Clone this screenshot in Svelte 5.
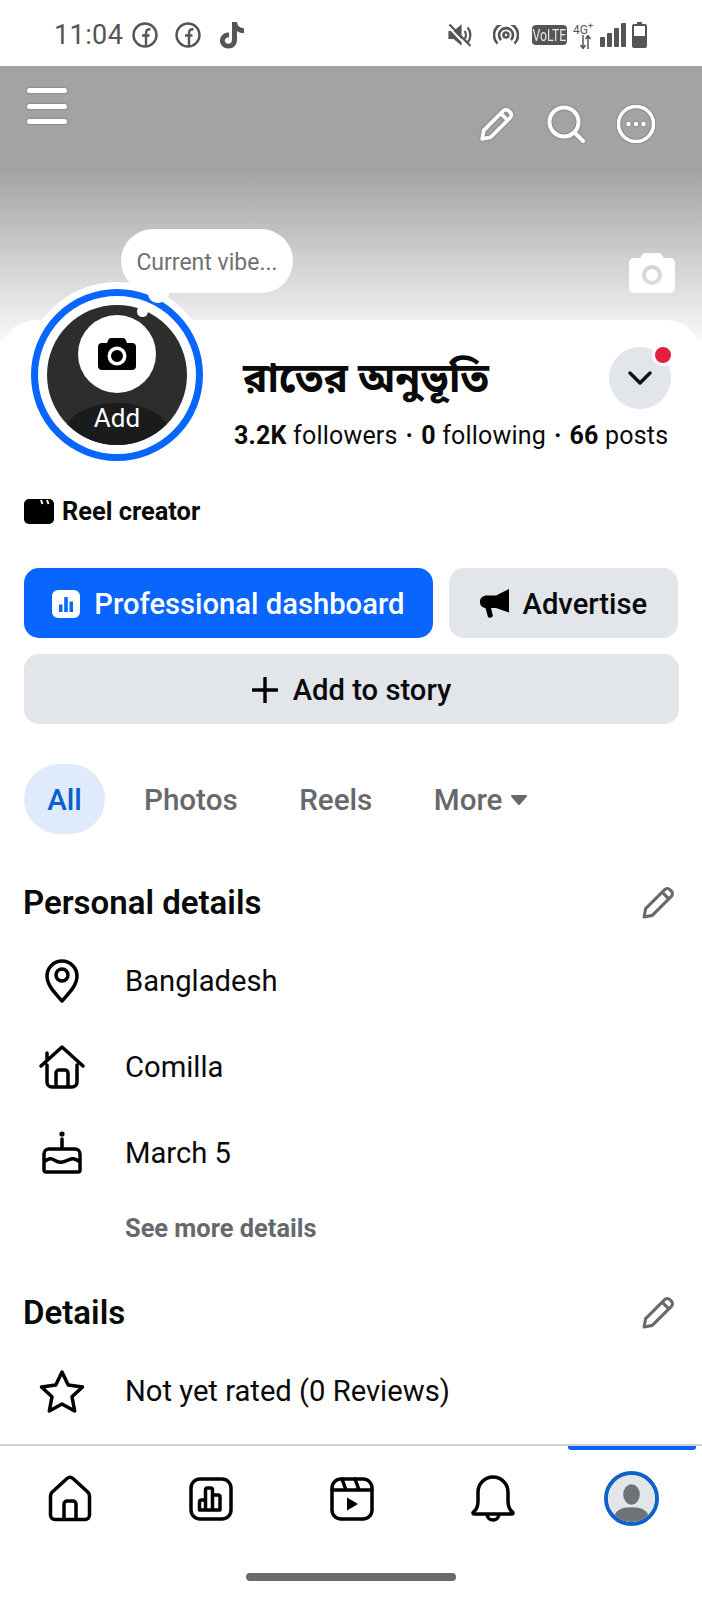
<script lang="ts">
  const tabs = ['Photos', 'Reels'];
  const penPath = 'M3 31l1.5-8L23 4.5a3.5 3.5 0 0 1 5 0L29.500 6a3.5 3.5 0 0 1 0 5L11 29.5ZM20.5 7l6.5 6.5';
</script>

<div class="phone">
  <header class="status">
    <span class="time">11:04</span>
    <svg class="fb" viewBox="0 0 26 26"><circle cx="13" cy="13" r="11.5" /><path d="M14 24V11.500c0-3 1-4.500 4.500-4.300M10 13.500h7.500" /></svg>
    <svg class="fb fb2" viewBox="0 0 26 26"><circle cx="13" cy="13" r="11.5" /><path d="M14 24V11.500c0-3 1-4.500 4.500-4.300M10 13.500h7.500" /></svg>
    <svg class="tiktok" viewBox="0 0 27 28"><path d="M14 1h5c.3 3.600 2.700 6 7 6.300v5c-2.700 0-5-.8-7-2.200V19c0 5-3.700 8.500-8.500 8.500S2 24 2 19.500 5.800 11 11 11.500v5c-2.500-.5-4.200 1-4.200 3 0 1.800 1.500 3.200 3.400 3.200 2.200 0 3.800-1.500 3.800-4Z" /></svg>
    <span class="spacer"></span>
    <svg class="mute" viewBox="0 0 24 24"><path class="mute-fill" d="M1.500 9H6l6.500-5.500v17L6 15H1.500Z" /><path d="M16.500 8c2 2 2 6 0 8M19.500 4.500c3.700 3.700 3.700 11.300 0 15" /><path class="mute-gap" d="M0 3.500l20 21" /><path d="M1.500 1.500l21 21.500" /></svg>
    <svg class="hotspot" viewBox="0 0 26 20"><circle cx="13" cy="10" r="2.5" /><path d="M8 15a7 7 0 1 1 10 0M4.500 18.500a12 12 0 1 1 17 0" /></svg>
    <span class="volte"><span>VoLTE</span></span>
    <span class="net">
      <span>4G<sup>+</sup></span>
      <svg viewBox="0 0 11 14"><path d="M3 0v13M0.500 10l2.500 3.500L5.500 10M8 14V1M5.500 4L8 .5 10.500 4" /></svg>
    </span>
    <svg class="signal" viewBox="0 0 26 24"><rect x="0" y="14" width="5" height="10" rx="1" /><rect x="7" y="10" width="5" height="14" rx="1" /><rect x="14" y="5" width="5" height="19" rx="1" /><rect x="21" y="0" width="5" height="24" rx="1" /></svg>
    <svg class="battery" viewBox="0 0 15 26"><path d="M5 0h5v2h3a2 2 0 0 1 2 2v20a2 2 0 0 1-2 2H2a2 2 0 0 1-2-2V4a2 2 0 0 1 2-2h3Zm-3 4v10h11V4Z" fill-rule="evenodd" /></svg>
  </header>

  <section class="cover">
    <div class="cover-bar">
      <div class="burger"><i></i><i></i><i></i></div>
      <div class="cover-actions">
        <svg viewBox="0 0 34 34" class="pen"><path d={penPath} /></svg>
        <svg viewBox="0 0 38 38" class="search"><circle cx="17" cy="17" r="14.5" /><path d="M27.500 27.500L36 36" /></svg>
        <svg viewBox="0 0 38 38" class="more"><circle cx="19" cy="19" r="17.5" /><circle class="dot" cx="11.5" cy="19" r="2.2" /><circle class="dot" cx="19" cy="19" r="2.2" /><circle class="dot" cx="26.5" cy="19" r="2.2" /></svg>
      </div>
    </div>
    <svg class="cover-cam" viewBox="0 0 46 40"><path fill-rule="evenodd" d="M17 0h12c3 0 4.500 1.500 5.500 5H41a5 5 0 0 1 5 5v25a5 5 0 0 1-5 5H5a5 5 0 0 1-5-5V10a5 5 0 0 1 5-5h6.500C12.500 1.500 14 0 17 0Zm6 12a10 10 0 1 0 0 20 10 10 0 0 0 0-20Zm0 4a6 6 0 1 1 0 12 6 6 0 0 1 0-12Z" /></svg>
  </section>

  <main class="sheet">
    <div class="head">
      <div class="avatar">
        <div class="bubble">Current vibe...</div>
        <i class="tail"></i>
        <i class="tail-dot"></i>
        <div class="avatar-ring">
          <div class="avatar-dark">
            <div class="cam-circle">
              <svg viewBox="0 0 38 32"><path fill-rule="evenodd" d="M13 0h12a3 3 0 0 1 3 2.500L29 5h5a4 4 0 0 1 4 4v19a4 4 0 0 1-4 4H4a4 4 0 0 1-4-4V9a4 4 0 0 1 4-4h5l1-2.500A3 3 0 0 1 13 0Zm6 8.500a9.500 9.500 0 1 0 0 19 9.500 9.500 0 0 0 0-19Zm0 3.500a6 6 0 1 1 0 12 6 6 0 0 1 0-12Z" /></svg>
            </div>
            <div class="add">Add</div>
          </div>
        </div>
      </div>
      <div class="head-info">
        <div class="name-row">
          <h1>রাতের অনুভূতি</h1>
          <div class="chev">
            <svg viewBox="0 0 24 16"><path d="M2 3l10 10L22 3" /></svg>
            <i></i>
          </div>
        </div>
        <p class="stats"><b>3.2K</b> followers <span>·</span> <b>0</b> following <span>·</span> <b>66</b> posts</p>
      </div>
    </div>

    <div class="reel">
      <svg viewBox="0 0 30 25"><path d="M5 0h20a5 5 0 0 1 5 5v15a5 5 0 0 1-5 5H5a5 5 0 0 1-5-5V5a5 5 0 0 1 5-5Z" /><path class="cut" d="M17 1l1.500 4M23 1l1.500 4" /></svg>
      <span>Reel creator</span>
    </div>

    <div class="btn-row">
      <button class="btn primary">
        <svg viewBox="0 0 28 28"><path fill-rule="evenodd" d="M6 0h16a6 6 0 0 1 6 6v16a6 6 0 0 1-6 6H6a6 6 0 0 1-6-6V6a6 6 0 0 1 6-6Zm1 14.500V22h3.500v-7.500Zm5.200-7.500v15h3.600V7Zm5.300 4.500V22H21V11.500Z" /></svg>
        Professional dashboard
      </button>
      <button class="btn advertise">
        <svg viewBox="0 0 29 29"><path d="M29 0v23.500L16 19H11l1.800 7.500c.5 2-4.300 3.300-5 1L5.500 19C2 18.500 0 16 0 13.500v-1C0 9 3 6.500 7 6.500h9Z" /></svg>
        Advertise
      </button>
    </div>
    <button class="btn wide">
      <svg viewBox="0 0 26 26"><path d="M13 1v24M1 13h24" /></svg>
      Add to story
    </button>

    <nav class="tabs">
      <span class="tab active">All</span>
      {#each tabs as t}
        <span class="tab">{t}</span>
      {/each}
      <span class="tab">More <svg class="caret" viewBox="0 0 18 12"><path d="M2 2h14l-7 8Z" /></svg></span>
    </nav>

    <div class="sec-head first">
      <h2>Personal details</h2>
      <svg viewBox="0 0 34 34"><path d={penPath} /></svg>
    </div>
    <div class="rows">
      <div class="row">
        <span class="ico"><svg viewBox="0 0 36 46" width="36" height="46"><path d="M18 43C10 34 3 27 3 18a15 15 0 0 1 30 0c0 9-7 16-15 25Z" /><circle cx="18" cy="17" r="6" /></svg></span>
        <span>Bangladesh</span>
      </div>
      <div class="row">
        <span class="ico"><svg viewBox="0 0 46 44" width="46" height="44"><path d="M8 20v17a5 5 0 0 0 5 5h20a5 5 0 0 0 5-5V20M2 21L23 2l21 19M8 14V8M17 42V28a3 3 0 0 1 3-3h6a3 3 0 0 1 3 3v14" /></svg></span>
        <span>Comilla</span>
      </div>
      <div class="row">
        <span class="ico"><svg viewBox="0 0 40 44" width="40" height="44"><circle class="solid" cx="20" cy="3" r="2.6" /><path d="M20 8v8M2 23a5 5 0 0 1 5-5h26a5 5 0 0 1 5 5v16a2 2 0 0 1-2 2H4a2 2 0 0 1-2-2ZM2 31c5-4 7-4 11-1.500s7 2.500 12 0 7-2.500 13 1.500" /></svg></span>
        <span>March 5</span>
      </div>
    </div>
    <div class="see-more">See more details</div>

    <div class="sec-head second">
      <h2>Details</h2>
      <svg viewBox="0 0 34 34"><path d={penPath} /></svg>
    </div>
    <div class="row rated">
      <span class="ico"><svg viewBox="0 0 46 44" width="46" height="44"><path d="M23 3l6.200 13 14.300 1.900-10.500 9.900 2.700 14.200L23 35l-12.700 7 2.700-14.200L2.500 17.900 16.800 16Z" /></svg></span>
      <span>Not yet rated (0 Reviews)</span>
    </div>
  </main>

  <footer class="nav">
    <i class="nav-active"></i>
    <svg viewBox="0 0 44 46" width="44" height="46"><path d="M2.500 20c0-1.500.5-2.800 1.500-3.800L19 2.500c1.800-1.500 4.200-1.500 6 0l15 13.700c1 1 1.500 2.300 1.500 3.800v19a4.500 4.500 0 0 1-4.500 4.500H7a4.500 4.500 0 0 1-4.500-4.500ZM16 43V28a3 3 0 0 1 3-3h6a3 3 0 0 1 3 3v15" /></svg>
    <svg viewBox="0 0 44 44" width="44" height="44"><rect x="2" y="2" width="40" height="40" rx="9" /><path d="M10.500 33V25a2 2 0 0 1 2-2h2a2 2 0 0 1 2 2v8ZM16.500 33V13a2 2 0 0 1 2-2h3a2 2 0 0 1 2 2v20ZM23.500 33V20a2 2 0 0 1 2-2H29a2 2 0 0 1 2 2v13Z" /></svg>
    <svg viewBox="0 0 44 44" width="44" height="44"><rect x="2" y="2" width="40" height="40" rx="9" /><path d="M2 13h40M12 2l4 11M25 2l4 11" /><path class="solid" d="M17 20.500v13l11-6.500Z" /></svg>
    <svg viewBox="0 0 44 46" width="44" height="46"><path d="M2.500 36c3.500-2.500 4.500-6 4.500-11V16a15 15 0 0 1 30 0v9c0 5 1 8.500 4.500 11 1 1 .5 2-1 2h-37c-1.500 0-2-1-1-2ZM16 38c0 8 12 8 12 0" /></svg>
    <div class="me">
      <svg viewBox="0 0 48 48" width="48" height="48"><circle class="me-bg" cx="24" cy="24" r="24" /><ellipse class="me-fg" cx="24" cy="20" rx="8.500" ry="10.500" /><path class="me-fg" d="M6 44c1-8 8-11 18-11s17 3 18 11c-10 6-26 6-36 0Z" /></svg>
    </div>
  </footer>
  <div class="home-bar"><i></i></div>
</div>

<style>
  :global(body) {
    margin: 0;
    background: #fff;
  }

  .phone {
    width: 702px;
    height: 1600px;
    overflow: hidden;
    background: #fff;
    font-family: Roboto, "Noto Sans Bengali", "Noto Sans", sans-serif;
    color: #0a0a0a;
  }

  /* status bar */
  .status {
    height: 66px;
    display: flex;
    align-items: center;
    padding: 4px 55px 0 54px;
    box-sizing: border-box;
    color: #555;
  }

  .status svg {
    flex-shrink: 0;
  }

  .time {
    font-size: 27px;
    width: 78px;
    letter-spacing: 0.4px;
  }

  .fb {
    width: 26px;
    height: 26px;
    fill: none;
    stroke: #555;
    stroke-width: 2.4;
  }

  .fb2 {
    margin-left: 17px;
  }

  .tiktok {
    width: 27px;
    height: 28px;
    margin-left: 17px;
    fill: #555;
  }

  .spacer {
    flex: 1;
  }

  .mute {
    width: 24px;
    height: 24px;
    fill: none;
    stroke: #555;
    stroke-width: 2.2;
  }

  .mute-fill {
    fill: #555;
  }

  .mute .mute-gap {
    stroke: #fff;
    stroke-width: 2;
  }

  .hotspot {
    width: 26px;
    height: 20px;
    margin-left: 21px;
    fill: none;
    stroke: #555;
    stroke-width: 2.6;
  }

  .volte {
    margin-left: 13px;
    width: 35px;
    height: 20px;
    background: #555;
    color: #e8e8e8;
    border-radius: 4px;
    font-size: 17px;
    line-height: 20px;
    display: flex;
    justify-content: center;
    overflow: hidden;
  }

  .volte span {
    transform: scaleX(0.72);
    white-space: nowrap;
  }

  .net {
    width: 27px;
    margin-left: 6px;
    font-size: 12px;
    line-height: 10px;
    display: flex;
    flex-direction: column;
    align-self: flex-start;
    margin-top: 21px;
  }

  .net sup {
    font-size: 9px;
    line-height: 0;
  }

  .net svg {
    width: 11px;
    height: 14px;
    margin-left: 7px;
    fill: none;
    stroke: #555;
    stroke-width: 1.5;
  }

  .signal {
    width: 26px;
    height: 24px;
    fill: #555;
  }

  .battery {
    width: 15px;
    height: 26px;
    margin-left: 6px;
    fill: #555;
  }

  /* cover */
  .cover {
    height: 274px;
    background: linear-gradient(#a3a3a3 0, #a3a3a3 38%, #f8f8f8 100%);
    position: relative;
  }

  .cover-bar {
    display: flex;
    justify-content: space-between;
    padding: 22px 47px 0 27px;
  }

  .burger {
    display: flex;
    flex-direction: column;
    gap: 10.5px;
    width: 40px;
    filter: drop-shadow(0 0 1px rgba(0, 0, 0, 0.35));
  }

  .burger i {
    height: 5px;
    border-radius: 3px;
    background: #fff;
  }

  .cover-actions {
    display: flex;
    align-items: center;
    gap: 32px;
    margin-top: 17px;
  }

  .cover-actions svg {
    fill: none;
    stroke: #fff;
    stroke-width: 3.5;
    stroke-linecap: round;
    stroke-linejoin: round;
    filter: drop-shadow(0 0 1px rgba(0, 0, 0, 0.35));
  }

  .cover-actions .search {
    stroke-width: 4;
  }

  .pen {
    width: 36px;
    height: 36px;
  }

  .search, .more {
    width: 38px;
    height: 38px;
  }

  .more .dot {
    fill: #fff;
    stroke: none;
  }

  .cover-cam {
    position: absolute;
    right: 27px;
    top: 187px;
    width: 46px;
    height: 40px;
    fill: #fff;
  }

  /* sheet */
  .sheet {
    position: relative;
    margin-top: -20px;
    height: 1124px;
    background: #fff;
    border-radius: 36px 36px 0 0;
    padding: 0 24px;
    box-sizing: border-box;
  }

  .head {
    display: flex;
    align-items: flex-start;
  }

  .avatar {
    position: relative;
    width: 172px;
    height: 172px;
    margin: -31px 0 0 7px;
    flex-shrink: 0;
  }

  .avatar-ring {
    position: relative;
    box-sizing: border-box;
    width: 172px;
    height: 172px;
    border-radius: 50%;
    border: 7px solid #0866ff;
    background: #fff;
    box-shadow: 0 0 0 7px #fff;
    display: flex;
    align-items: center;
    justify-content: center;
  }

  .avatar-dark {
    position: relative;
    width: 140px;
    height: 140px;
    border-radius: 50%;
    overflow: hidden;
    background: #2d2d2d;
  }

  .cam-circle {
    width: 78px;
    height: 78px;
    margin: 10px auto 0;
    border-radius: 50%;
    background: #fff;
    display: flex;
    align-items: center;
    justify-content: center;
  }

  .cam-circle svg {
    width: 38px;
    height: 32px;
    fill: #000;
  }

  .add {
    position: absolute;
    left: 17px;
    right: 17px;
    bottom: 0;
    height: 42px;
    border-radius: 53px 53px 0 0 / 32px 32px 0 0;
    background: #191b1c;
    color: #fff;
    font-size: 26px;
    line-height: 30px;
    text-align: center;
  }

  .bubble {
    position: absolute;
    z-index: 2;
    left: 90px;
    top: -60px;
    width: 172px;
    height: 64px;
    box-sizing: border-box;
    border-radius: 32px;
    background: #fff;
    color: #707070;
    font-size: 23px;
    line-height: 68px;
    text-align: center;
    white-space: nowrap;
  }

  .tail {
    position: absolute;
    z-index: 3;
    left: 117px;
    top: 0;
    width: 22px;
    height: 14px;
    border-radius: 0 0 14px 10px;
    background: #fff;
  }

  .tail-dot {
    position: absolute;
    z-index: 3;
    left: 106px;
    top: 17px;
    width: 11px;
    height: 11px;
    border-radius: 50%;
    background: #fff;
  }

  .head-info {
    flex: 1;
    margin-left: 31px;
    min-width: 0;
  }

  .name-row {
    display: flex;
    justify-content: space-between;
    align-items: flex-start;
    padding: 27px 7px 0 9px;
  }

  h1 {
    margin: 4px 0 0;
    font-size: 40.5px;
    font-weight: 700;
    line-height: 54px;
    white-space: nowrap;
  }

  .chev {
    position: relative;
    width: 62px;
    height: 62px;
    border-radius: 50%;
    background: #e2e5e9;
    display: flex;
    align-items: center;
    justify-content: center;
  }

  .chev svg {
    width: 24px;
    height: 16px;
    fill: none;
    stroke: #111;
    stroke-width: 3.4;
    stroke-linecap: round;
    stroke-linejoin: round;
  }

  .chev i {
    position: absolute;
    right: -3px;
    top: -3px;
    width: 16px;
    height: 16px;
    border-radius: 50%;
    background: #e41e3f;
    border: 3px solid #fff;
  }

  .stats {
    margin: 12px 0 0;
    font-size: 25px;
    line-height: 30px;
    white-space: nowrap;
    letter-spacing: 0.2px;
  }

  .stats b {
    font-weight: 700;
  }

  .stats span {
    margin: 0 1.5px;
    font-weight: 700;
  }

  .reel {
    display: flex;
    align-items: center;
    gap: 8px;
    margin-top: 36px;
    height: 28px;
  }

  .reel svg {
    width: 30px;
    height: 25px;
    fill: #000;
  }

  .reel .cut {
    fill: none;
    stroke: #fff;
    stroke-width: 2;
  }

  .reel span {
    font-size: 25.4px;
    font-weight: 700;
  }

  .btn-row {
    display: flex;
    gap: 16px;
    margin-top: 43px;
  }

  .btn {
    height: 70px;
    border: none;
    border-radius: 15px;
    font-family: inherit;
    font-size: 29.2px;
    font-weight: 500;
    display: flex;
    align-items: center;
    justify-content: center;
    gap: 14px;
    background: #e2e5e9;
    color: #0a0a0a;
    padding: 1px 0 0;
  }

  .primary {
    width: 410px;
    background: #0866ff;
    color: #fff;
  }

  .primary svg {
    width: 28px;
    height: 28px;
    fill: #fff;
  }

  .advertise {
    width: 230px;
    gap: 14px;
  }

  .advertise svg {
    width: 29px;
    height: 29px;
    fill: #000;
  }

  .wide {
    width: 655px;
    margin-top: 16px;
    gap: 15px;
  }

  .wide svg {
    width: 26px;
    height: 26px;
    fill: none;
    stroke: #000;
    stroke-width: 3.4;
    stroke-linecap: round;
  }

  .tabs {
    display: flex;
    align-items: center;
    gap: 21.5px;
    margin-top: 40px;
  }

  .tab {
    height: 70px;
    box-sizing: border-box;
    padding: 2px 20px 0;
    font-size: 29.6px;
    font-weight: 500;
    color: #65686c;
    display: flex;
    align-items: center;
    gap: 8px;
  }

  .tab.active {
    width: 81px;
    justify-content: center;
    padding: 2px 0 0;
    margin-right: -2.5px;
    border-radius: 35px;
    background: #dfebfb;
    color: #0a5fd1;
  }

  .caret {
    width: 18px;
    height: 12px;
    fill: #65686c;
    stroke: #65686c;
    stroke-width: 2;
    stroke-linejoin: round;
  }

  .sec-head {
    display: flex;
    align-items: center;
    justify-content: space-between;
    height: 40px;
    padding-right: 2px;
  }

  .first {
    margin-top: 48px;
  }

  .second {
    margin-top: 49px;
  }

  h2 {
    margin: 0 0 0 -1px;
    font-size: 33px;
    font-weight: 600;
  }

  .sec-head svg {
    width: 35px;
    height: 35px;
    fill: none;
    stroke: #65686c;
    stroke-width: 3;
    stroke-linecap: round;
    stroke-linejoin: round;
  }

  .rows {
    margin-top: 16px;
  }

  .row {
    display: flex;
    align-items: center;
    height: 86px;
    font-size: 29.2px;
    color: #0a0a0a;
  }

  .ico {
    width: 75px;
    height: 46px;
    margin-right: 26px;
    display: flex;
    align-items: center;
    justify-content: center;
  }

  .ico svg, .nav svg {
    fill: none;
    stroke: #000;
    stroke-width: 3.5;
    stroke-linecap: round;
    stroke-linejoin: round;
    overflow: visible;
  }

  .ico .solid, .nav .solid {
    fill: #000;
    stroke: none;
  }

  .see-more {
    margin: 17px 0 0 101px;
    font-size: 25.4px;
    line-height: 30px;
    font-weight: 700;
    color: #65686c;
  }

  .rated {
    height: 80px;
    margin-top: 19px;
  }

  .nav {
    position: relative;
    height: 129px;
    box-sizing: border-box;
    border-top: 2px solid #d3d3d3;
    background: #fff;
    display: grid;
    grid-template-columns: repeat(4, 141px) 1fr;
    grid-template-rows: 105px;
    align-items: center;
    padding-left: 48px;
  }

  .nav-active {
    position: absolute;
    top: 0;
    right: 6px;
    width: 128px;
    height: 4px;
    border-radius: 0 0 3px 3px;
    background: #0866ff;
  }

  .me {
    width: 55px;
    height: 55px;
    margin-left: -8px;
    box-sizing: border-box;
    border-radius: 50%;
    border: 4px solid #0f62c9;
    overflow: hidden;
  }

  .nav .me svg {
    display: block;
    stroke: none;
    width: 47px;
    height: 47px;
  }

  .nav .me-bg {
    fill: #e2e5e9;
  }

  .nav .me-fg {
    fill: #6f7276;
  }

  .home-bar {
    display: flex;
    justify-content: center;
  }

  .home-bar i {
    width: 210px;
    height: 8px;
    border-radius: 4px;
    background: #6b6b6b;
  }
</style>
